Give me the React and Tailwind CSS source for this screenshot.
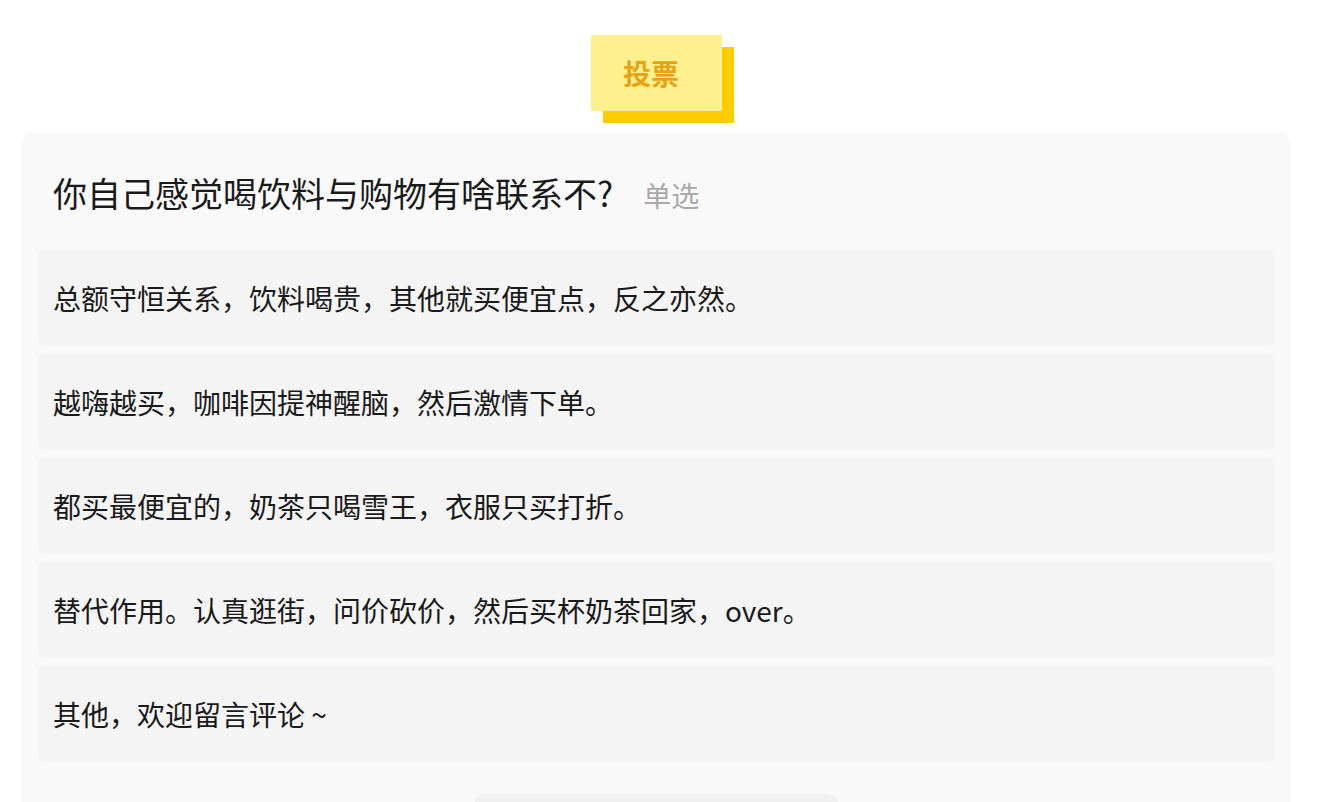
import React from 'react';

const options = [
    '总额守恒关系，饮料喝贵，其他就买便宜点，反之亦然。',
    '越嗨越买，咖啡因提神醒脑，然后激情下单。',
    '都买最便宜的，奶茶只喝雪王，衣服只买打折。',
    '替代作用。认真逛街，问价砍价，然后买杯奶茶回家，over。',
    '其他，欢迎留言评论 ~',
];

const font = { fontFamily: '"Noto Sans CJK SC", "Noto Sans", sans-serif' };

export default function App() {
    return (
        <div className="min-h-screen bg-white overflow-hidden" style={font}>
            <div className="ml-[21px] w-[1270px]">
                {/* badge */}
                <div className="flex justify-center pt-[35px] pb-[20px]">
                    <div className="w-[131px] h-[76px] bg-[#fff08f] shadow-[12px_12px_0_#ffcc00] flex items-center justify-center pr-[10px]">
                        <span className="text-[28px] font-bold text-[#e3a514] leading-none">投票</span>
                    </div>
                </div>

                {/* card */}
                <div className="bg-[#f9f9f9] rounded-[12px] pl-[17px] pr-[16px] pb-[40px]">
                    <div className="flex items-baseline pl-[15px] pt-[36px] pb-[29px] leading-[51px]">
                        <span className="text-[34px] text-[#1a1a1a]">你自己感觉喝饮料与购物有啥联系不?</span>
                        <span className="ml-[30px] text-[28px] text-[#aaaaaa]">单选</span>
                    </div>
                    <div className="flex flex-col gap-2">
                        {options.map((o) => (
                            <div key={o} className="h-[96px] flex items-center px-[15px] bg-[#f4f4f4] rounded-md text-[28px] text-[#1a1a1a] whitespace-pre">
                                {o}
                            </div>
                        ))}
                    </div>
                    <div className="flex justify-center mt-[32px]">
                        <div className="w-[365px] h-[80px] rounded-[12px] bg-[#f0f0f0]" />
                    </div>
                </div>
            </div>
        </div>
    );
}
